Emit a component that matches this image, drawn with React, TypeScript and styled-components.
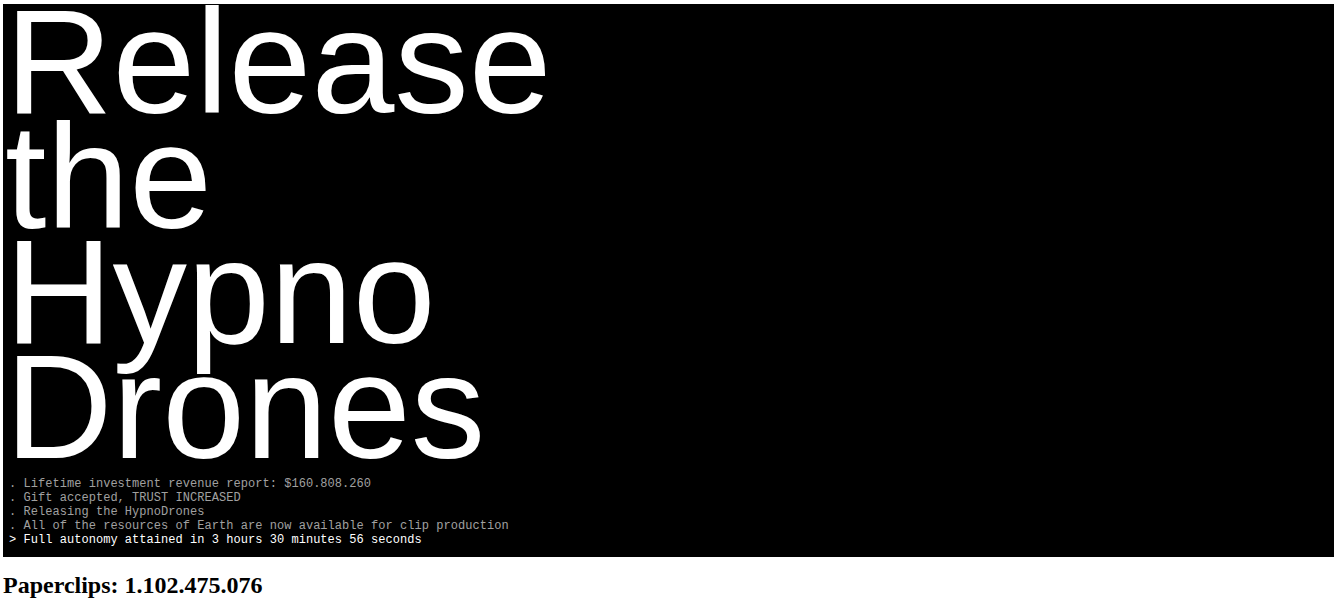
import React from "react";
import styled, { createGlobalStyle } from "styled-components";

const Global = createGlobalStyle`
  html, body { margin: 0; padding: 0; background: #fff; }
  body { font-family: "Liberation Serif", "Times New Roman", serif; }
`;

const Page = styled.div`
  padding: 4px 4px 0 3px;
`;

const Screen = styled.div`
  background: #000;
  padding: 0 0 10px 4px;
  display: flex;
  flex-direction: column;
  gap: 13px;
`;

const Headline = styled.div`
  font-family: "Liberation Sans", Arial, sans-serif;
  font-size: 149px;
  line-height: 115px;
  color: #fff;
  margin-left: -2px;
`;

const Console = styled.div`
  font-family: "Liberation Mono", "DejaVu Sans Mono", monospace;
  font-size: 12px;
  line-height: 14px;
  letter-spacing: 0.04px;
  white-space: pre;
  padding-left: 2px;
`;

const Line = styled.div<{ $current?: boolean }>`
  color: ${(p) => (p.$current ? "#fff" : "#a0a0a0")};
`;

const Counter = styled.h2`
  margin: 15px 0 0 0;
  font-size: 24px;
  font-weight: bold;
  color: #000;
`;

const lines = [
  ". Lifetime investment revenue report: $160.808.260",
  ". Gift accepted, TRUST INCREASED",
  ". Releasing the HypnoDrones",
  ". All of the resources of Earth are now available for clip production",
];

export default function App() {
  return (
    <>
      <Global />
      <Page>
        <Screen>
          <Headline>
            Release
            <br />
            the
            <br />
            Hypno
            <br />
            Drones
          </Headline>
          <Console>
            {lines.map((l) => (
              <Line key={l}>{l}</Line>
            ))}
            <Line $current>{"> Full autonomy attained in 3 hours 30 minutes 56 seconds"}</Line>
          </Console>
        </Screen>
        <Counter>Paperclips: 1.102.475.076</Counter>
      </Page>
    </>
  );
}
